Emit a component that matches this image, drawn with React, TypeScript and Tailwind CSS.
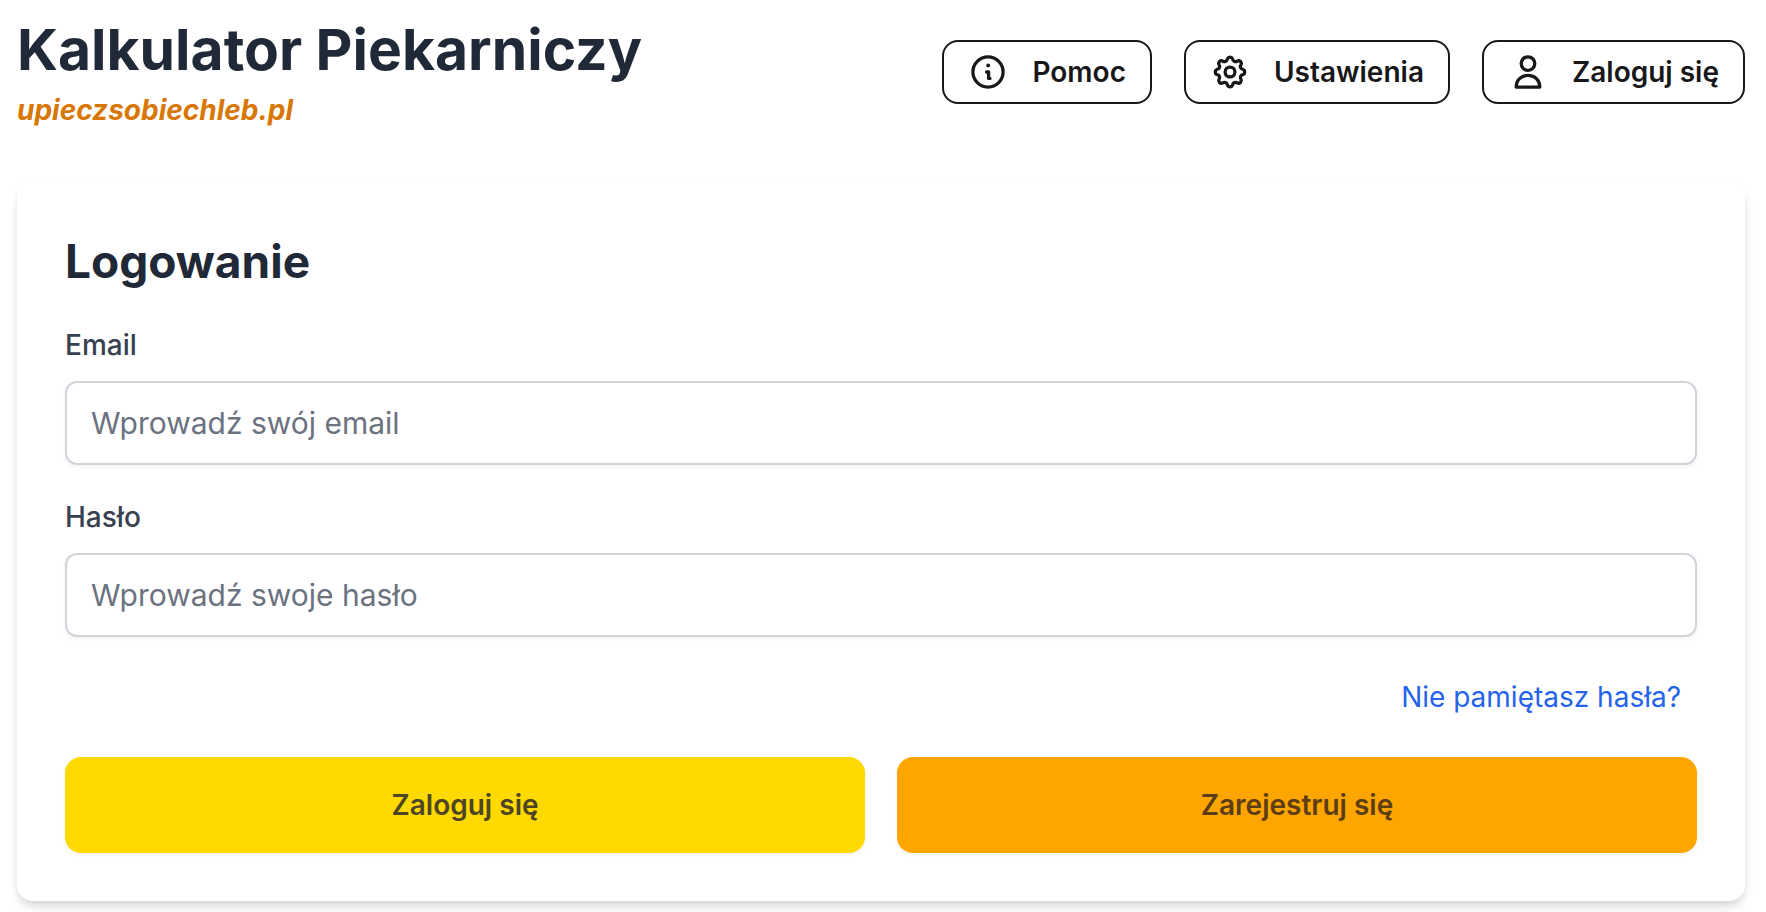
import type { ReactNode } from 'react';

function Icon({ children }: { children: ReactNode }) {
  return (
    <svg
      viewBox="0 0 40 40"
      className="size-10 shrink-0"
      fill="none"
      stroke="currentColor"
      strokeWidth="3.3"
      strokeLinecap="round"
      strokeLinejoin="round"
      aria-hidden="true"
    >
      {children}
    </svg>
  );
}

function InfoIcon() {
  return (
    <Icon>
      <circle cx="20" cy="20" r="15.1" />
      <path d="M18.6 20H20.6V26.4H22" />
      <circle cx="20.2" cy="13.4" r="1.9" fill="currentColor" stroke="none" />
    </Icon>
  );
}

// Eight rounded teeth joined by rounded valleys.
const gearPath = (() => {
  const point = (i: number) => {
    const a = ((i - 0.5) / 16) * Math.PI * 2;
    return `${(20 + 13.3 * Math.sin(a)).toFixed(2)} ${(20 - 13.3 * Math.cos(a)).toFixed(2)}`;
  };
  let d = `M${point(0)}`;
  for (let i = 1; i <= 16; i += 1) {
    d += i % 2 === 1 ? `A2.8 2.8 0 0 1 ${point(i)}` : `A2.9 2.9 0 0 0 ${point(i)}`;
  }
  return `${d}Z`;
})();

function GearIcon() {
  return (
    <Icon>
      <path d={gearPath} />
      <circle cx="20" cy="20" r="4.9" />
    </Icon>
  );
}

function UserIcon() {
  return (
    <Icon>
      <circle cx="20" cy="11.6" r="6.8" />
      <path d="M8.2 35.1C8.2 28 13.2 23.4 20 23.4S31.8 28 31.8 35.1Z" />
    </Icon>
  );
}

function HeaderButton({ icon, children }: { icon: ReactNode; children: ReactNode }) {
  return (
    <button
      type="button"
      className="flex h-16 items-center gap-6 rounded-2xl border-2 border-[#18181b] px-6 text-[28px] leading-10 font-semibold text-[#18181b]"
    >
      {icon}
      {children}
    </button>
  );
}

function Field({ id, label, type, placeholder }: { id: string; label: string; type: string; placeholder: string }) {
  return (
    <div>
      <label htmlFor={id} className="block text-[28px] leading-10 font-medium text-[#374151]">
        {label}
      </label>
      <input
        id={id}
        type={type}
        placeholder={placeholder}
        className="mt-4 block h-[84px] w-full rounded-xl border-2 border-[#d1d5db] bg-white px-6 text-[30px] text-[#1f2937] shadow-[0_2px_4px_rgba(0,0,0,0.05)] placeholder:text-[#6b7280]"
      />
    </div>
  );
}

export default function App() {
  return (
    <div className="min-h-screen bg-white pr-[21px] pl-[17px] font-[Inter,sans-serif]">
      <header className="flex items-start justify-between">
        <div className="pt-3">
          <h1 className="text-[57px] leading-[76px] font-bold text-[#1f2937]">Kalkulator Piekarniczy</h1>
          <p className="text-[28px] leading-11 font-bold text-[#d97706] italic">upieczsobiechleb.pl</p>
        </div>
        <nav className="flex gap-8 pt-10">
          <HeaderButton icon={<InfoIcon />}>Pomoc</HeaderButton>
          <HeaderButton icon={<GearIcon />}>Ustawienia</HeaderButton>
          <HeaderButton icon={<UserIcon />}>Zaloguj się</HeaderButton>
        </nav>
      </header>
      <main className="mt-[49px] rounded-2xl bg-white p-12 shadow-[0_8px_12px_-2px_rgba(0,0,0,0.1),0_4px_8px_-2px_rgba(0,0,0,0.1)]">
        <h2 className="text-[46px] leading-16 font-bold text-[#1f2937]">Logowanie</h2>
        <form className="mt-8" onSubmit={(e) => e.preventDefault()}>
          <div className="flex flex-col gap-8">
            <Field id="email" label="Email" type="email" placeholder="Wprowadź swój email" />
            <Field id="password" label="Hasło" type="password" placeholder="Wprowadź swoje hasło" />
          </div>
          <div className="mt-10 flex justify-end pr-4">
            <a href="#reset" className="text-[28px] leading-10 text-[#2563eb]">
              Nie pamiętasz hasła?
            </a>
          </div>
          <div className="mt-10 grid grid-cols-2 gap-8">
            <button
              type="submit"
              className="h-24 rounded-2xl bg-[#ffd900] text-[28px] font-semibold text-[#4d4524] shadow-[0_2px_4px_rgba(0,0,0,0.05)]"
            >
              Zaloguj się
            </button>
            <button
              type="button"
              className="h-24 rounded-2xl bg-[#ffa500] text-[28px] font-semibold text-[#5c3d14] shadow-[0_2px_4px_rgba(0,0,0,0.05)]"
            >
              Zarejestruj się
            </button>
          </div>
        </form>
      </main>
    </div>
  );
}
